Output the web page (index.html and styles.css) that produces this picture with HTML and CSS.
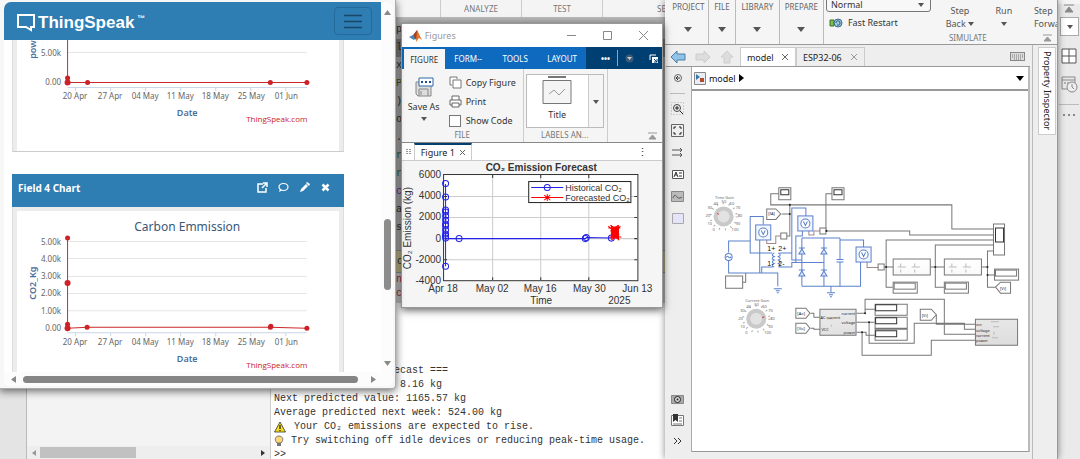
FILE: index.html
```html
<!DOCTYPE html>
<html lang="en">
<head>
<meta charset="utf-8">
<title>Energy monitoring desktop</title>
<link rel="stylesheet" href="styles.css">
</head>
<body>
<main class="desktop">
  <section class="ide">
    <header class="ide-strip"><span>ANALYZE</span><span>TEST</span><span class="cut">SE</span></header>
    <div class="ide-body">
      <div class="rail"></div>
      <div class="files">
        <div class="hbar"><svg width="6" height="6"><path d="M5 0v6L1 3z" fill="#999"/></svg><i class="hthumb"></i><svg width="6" height="6"><path d="M1 0v6l4-3z" fill="#333"/></svg></div>
      </div>
      <div class="work">
        <div class="editor">
          <p>p</p><p class="dim">l</p><p>x</p><p class="green">P</p><p>)</p><p>o</p><p>.</p><p class="green">r</p><p class="green">r</p><p class="violet">c</p><p>a</p><p>s</p>
        </div>
        <div class="warn">c</div>
        <div class="errors"><p>n</p><p>c</p></div>
        <pre class="console">=== CO₂ Emission Forecast ===
Last recorded value: 8.16 kg
Next predicted value: 1165.57 kg
Average predicted next week: 524.00 kg
<svg class="emoji" viewBox="0 0 12 12"><path d="M6 1L11.500 11H.5z" fill="#f6dc1c" stroke="#333" stroke-width=".8"/><path d="M6 4v4M6 9v1" stroke="#222" stroke-width="1.300"/></svg> Your CO₂ emissions are expected to rise.
<svg class="emoji bulb" viewBox="0 0 10 12"><path d="M3 8C0 5 1 1 5 1s5 4 2 7z" fill="#fbd77c" stroke="#555" stroke-width=".8"/><path d="M3 8h4v3H3z" fill="#777"/></svg>Try switching off idle devices or reducing peak-time usage.
&gt;&gt;</pre>
      </div>
      <aside class="ide-right">
        <svg width="10" height="9"><path d="M0 1h10M5 3l4 5H1z" stroke="#888" fill="#888"/></svg>
        <button class="combo" aria-label="Options"><svg width="6" height="4"><path d="M0 0h6L3 4z" fill="#555"/></svg></button>
        <svg width="16" height="16"><path d="M1 1h14v14H1zM8 1v14M1 8h14" fill="#fff" stroke="#555"/></svg>
        <svg width="17" height="17"><path d="M1 1h13v12H1zM1 4h13" fill="none" stroke="#888"/><path d="M3 7h2M6 7h2" stroke="#777"/><circle cx="11" cy="11" r="5" fill="#eee" stroke="#888"/><path d="M11 8v3l2 2" fill="none" stroke="#888"/></svg>
        <hr>
        <svg width="14" height="4"><path d="M1 2h2M6 2h2M11 2h2" stroke="#888" stroke-width="2"/></svg>
      </aside>
    </div>
  </section>

  <section class="sim">
    <header class="sim-tools">
      <div class="group first"><span>PROJECT</span><b class="down"></b></div>
      <div class="group file"><span>FILE</span><b class="down"></b></div>
      <div class="group"><span>LIBRARY</span><b class="down"></b></div>
      <div class="group"><span>PREPARE</span><b class="down"></b></div>
      <div class="simulate">
        <div class="sim-mode">
          <div class="mode"><select aria-label="Simulation mode"><option>Normal</option></select><b class="down small"></b></div>
          <button><svg width="14" height="12"><path d="M1 3h4v6H1z" fill="#7ac143" stroke="#3c6e2c"/><path d="M5 6h3" stroke="#333"/><ellipse cx="9" cy="6" rx="4" ry="4" fill="#9ec5dc" stroke="#3a6d8c"/><path d="M7 6c0-3 4-3 4 0s-3 2-3 2" fill="none" stroke="#245a7c"/></svg>Fast Restart</button>
        </div>
        <button class="step">Step<br>Back <b class="down small"></b></button>
        <button class="step">Run<br><b class="down small"></b></button>
        <button class="step last">Step<br>Forwa</button>
        <span class="sim-label">SIMULATE</span>
        <svg class="collapse" width="9" height="8"><path d="M0 1h9M4.500 3L8 7H1z" stroke="#999" fill="#999"/></svg>
      </div>
    </header>
    <div class="sim-body">
      <div class="sim-main">
        <nav class="tabs">
          <svg width="16" height="14"><path d="M1 7l6-6v3h8v6H7v3z" fill="#8fc3ea" stroke="#4d7da3"/></svg>
          <svg width="16" height="14"><path d="M15 7L9 1v3H1v6h8v3z" fill="#ddd" stroke="#ccc"/></svg>
          <svg width="14" height="14"><path d="M7 1L1 7h3v6h6V7h3z" fill="#ddd" stroke="#ccc"/></svg>
          <button class="tab on">model <svg width="8" height="8"><path d="M1 1l6 6M7 1L1 7" stroke="#666"/></svg></button>
          <button class="tab">ESP32-06 <svg width="8" height="8"><path d="M1 1l6 6M7 1L1 7" stroke="#999"/></svg></button>
          <svg class="keys" width="15" height="9"><rect x=".5" y=".5" width="14" height="8" fill="#ddd" stroke="#888"/><path d="M2 3h11M2 5h11M4 7h7" stroke="#777" stroke-dasharray="1 1"/></svg>
        </nav>
        <div class="sim-area">
          <div class="palette">
            <svg width="12" height="12"><circle cx="6" cy="6" r="3.500" fill="none" stroke="#666"/><path d="M8 6H4M6 4L4 6l2 2" fill="none" stroke="#333"/></svg>
            <hr>
            <svg width="13" height="13"><path d="M.5.5h12v12H.5z" fill="none" stroke="#aaa" stroke-dasharray="1 2"/><circle cx="6" cy="6" r="3.500" fill="#eee" stroke="#444"/><path d="M4 6h4M6 4v4M9 9l3 3" stroke="#222"/></svg>
            <svg width="13" height="13"><path d="M.5.5h12v12H.5z" fill="#eee" stroke="#666"/><path d="M3 5V3h2M8 3h2v2M10 8v2H8M5 10H3V8" fill="none" stroke="#222"/></svg>
            <svg width="13" height="13"><path d="M1 4h10M9 2l2 2-2 2M1 9h10M9 7l2 2-2 2" fill="none" stroke="#555"/></svg>
            <svg width="12" height="13"><path d="M.5 2.500h11v8H.5z" fill="#fff" stroke="#555"/><path d="M2 9l2-5 2 5M3 7h2M7 5h3M7 8h3" fill="none" stroke="#333"/></svg>
            <svg width="13" height="13"><path d="M.5 1.500h12v10H.5z" fill="#bbb" stroke="#888"/><path d="M2 8c2-5 3-2 4-1s2 2 5 0" fill="none" stroke="#555"/></svg>
            <svg width="12" height="13"><path d="M.5 1.500h11v10H.5z" fill="#e4e5fa" stroke="#aaa"/></svg>
            <span class="spring"></span>
            <svg width="13" height="12"><path d="M.5 2.500h12v8H.5z" fill="#aaa" stroke="#888"/><circle cx="6.500" cy="6.500" r="3" fill="#ddd" stroke="#222"/><circle cx="6.500" cy="6.500" r="1" fill="#222"/></svg>
            <svg width="13" height="13"><path d="M.5 1.500h12v10H.5z" fill="#fff" stroke="#777"/><path d="M2 0h5v8L4.500 6 2 8z" fill="#333"/><path d="M8 4h3M8 7h3M2 10h9" stroke="#777"/></svg>
            <svg width="10" height="10"><path d="M1 2l3 3-3 3M5 2l3 3-3 3" fill="none" stroke="#333"/></svg>
          </div>
          <div class="model">
            <div class="crumb"><svg width="12" height="13"><path d="M.5.5h11v12H.5z" fill="#e8eef4" stroke="#888"/><path d="M2 2l4 3-4 3z" fill="#3578ab"/><path d="M6 6h4v4H6z" fill="#b5492d"/></svg>model<svg width="5" height="8"><path d="M0 0l5 4-5 4z"/></svg><svg class="menu" width="8" height="5"><path d="M0 0h8L4 5z"/></svg></div>
            <div class="canvas">
            <svg class="diagram" viewBox="693 91 335 360" role="img" aria-label="Power supply model">
              <defs>
                <linearGradient id="g" x1="0" y1="0" x2="0" y2="1"><stop offset="0" stop-color="#fff"/><stop offset="1" stop-color="#ddd"/></linearGradient>
                <g id="knob"><circle r="13" fill="none" stroke="#aaa" stroke-width="2" stroke-dasharray="1 5"/><circle r="10" fill="#c9c9c9"/><circle r="6" fill="#e2e2e2"/>
                  <g class="tiny"><text x="-11" y="15">0</text><text x="-16" y="9">10</text><text x="-18" y="1">20</text><text x="-16" y="-7">30</text><text x="-10" y="-11">40</text><text x="-2" y="-13">50</text><text x="6" y="-11">60</text><text x="12" y="-7">70</text><text x="14" y="1">80</text><text x="12" y="9">90</text><text x="8" y="15">100</text></g></g>
                <g id="volt"><rect x="-7.500" y="-7.500" width="15" height="15" fill="#f2f6fe"/><circle r="4.500" fill="#fff"/><path d="M-2-2L0 2l2-4"/></g>
                <path id="diode" d="M-3 3h6L0-2zM-3-3h6" fill="#dde7fa"/>
                <path id="earth" d="M-4 0h8M-2 2h4M-1 4h2"/>
                <g id="show"><rect width="24" height="11" fill="#fff"/><rect class="dark" x="1" y="1" width="21" height="6"/></g>
              </defs>
              <g class="wire">
                <path d="M780 193.500h-8.500v11h180.500v24h42M790.500 204.500v31h-3M782.500 213.500h8M833 193.500h-6.500v37M826 230.500h84v4h84M884 266.500h103.500M893 286.500h-6.500v-47h107.500M944 286.500h-8.500v-42h58.500M994 250.500h-6.500v36h8M987.500 274.500h8"/>
                <path d="M857 312.500h8.500v-14h79v35h31M865.500 308.500h10M857 321.500h18M869.500 321.500v21h45v-20h50v6h11M857 331.500h9.500v3h9M862.500 331.500v23h69v-15h44M936.500 314v9.500h39M811 312.500h3.500v4h6M811 327.500h3.500v1h6M743.500 281.500h3v-9"/>
                <path class="brown" d="M767.500 239v4h9v-7.500h5M809.500 230.500v4h5v-4h6M867.500 261.500v5.500h11.500"/>
                <path d="M779.500 187.500h12v12h-12zM832.500 187.500h12v12h-12zM781.500 232.500h6v6h-6zM820.500 227.500h6v6h-6zM878.500 263.500h6v6h-6zM726.500 275.500h17v12h-17zM993.500 223.500h11v31h-11z" fill="#fff"/>
                <path class="dark" d="M781.500 189.500h8v5h-8zM834.500 189.500h8v5h-8zM995.500 227.500h8v14h-8z"/>
                <path fill="#fff" d="M767.500 208.500h9l5 5-5 5.500h-9zM796.500 307.500h10l4 5-4 5h-10zM796.500 322.500h10l4 5-4 5h-10zM920.500 308.500h11l5 5.500-5 5.500h-11zM995.500 286.500l5-5h10v11h-10z"/>
                <g fill="url(#g)"><path d="M893.500 258.500h37v16h-37zM944.500 258.500h37v16h-37zM820.500 308.500h36v26h-36zM975.500 318.500h42v26h-42z"/></g>
                <path class="faint" d="M901 263v3M901 269v3M915 263v3M915 269v3M898 266.500h8M912 266.500h8M952 263v3M952 269v3M966 263v3M966 269v3M949 266.500h8M963 266.500h8M828 318h6M832 324v2M991 321h8M993 326h6M992 337h6M994 331v3"/>
                <use href="#show" x="893.500" y="281.500"/><use href="#show" x="944.500" y="281.500"/><use href="#show" x="994.500" y="268.500"/>
                <path fill="#fff" d="M875.500 303.500h32v11h-32zM875.500 316.500h32v11h-32zM875.500 328.500h32v11h-32z"/>
                <path class="dark" d="M876 304h21v6h-21zM876 317h21v6h-21zM876 330h21v6h-21z"/>
              </g>
              <g class="blue">
                <circle cx="729.500" cy="256.500" r="3.500"/><path d="M727 257c2-4 3 3 5-1M729.500 252v-11.500h21.500M764 224v-8h-13v36.500h22M729.500 260v12.500h49v13M760.500 239v33.500M762.500 272.500v-6h11M780 252.500h12.500v-45h14v8M792.500 252.500v7h10M780 266.500h12.500v-4.500h32M796.500 262v-26.500h6.500v-5"/>
                <path d="M802.500 237.500V285M824.500 237.500V285M802.500 237.500h38M802.500 285.500h58.500v-24M840.500 237.500v21M837 259h7M837 261.500h7M840.500 262v23.500M840.500 239.500h23.500v7M831.500 285.500v6"/>
                <path d="M775 252.500q-4 2 0 3.500q-4 2 0 3.500q-4 2 0 3.500q-4 2 0 3.500M779 252.500q4 2 0 3.500q4 2 0 3.500q4 2 0 3.500q4 2 0 3.500"/>
                <use href="#volt" x="764" y="232"/><use href="#volt" x="806" y="223"/><use href="#volt" x="864" y="254"/>
                <use href="#diode" x="802.500" y="250.500"/><use href="#diode" x="824.500" y="250.500"/><use href="#diode" x="802.500" y="272.500"/><use href="#diode" x="824.500" y="272.500"/>
                <use href="#earth" x="778.500" y="288"/><use href="#earth" x="831.500" y="292"/>
              </g>
              <g fill="#222"><circle cx="790.500" cy="204.500" r="1"/><circle cx="790.500" cy="213.500" r="1"/><circle cx="827" cy="230.500" r="1"/><circle cx="886.500" cy="266.500" r="1"/><circle cx="935.500" cy="266.500" r="1"/><circle cx="987.500" cy="266.500" r="1"/><circle cx="987.500" cy="274.500" r="1"/><circle cx="865.500" cy="312.500" r="1"/><circle cx="869.500" cy="321.500" r="1"/><circle cx="862.500" cy="331.500" r="1"/></g>
              <use href="#knob" x="724.500" y="216"/><use href="#knob" x="757" y="318"/>
              <path d="M718 213l2 1M765 316l-2 1" stroke="#d33"/>
              <g class="tiny"><text x="716" y="199">Time Gain</text><text x="746" y="301">Current Gain</text></g>
              <g class="tag"><text x="769" y="215">[IA]</text><text x="798" y="314">[Ao]</text><text x="798" y="329">[Vo]</text><text x="922" y="316">[Vi]</text><text x="1000" y="289">[Vi]</text><text x="821" y="318">AC current</text><text x="822" y="330">VCC</text><text x="842" y="314">current</text><text x="842" y="323">voltage</text><text x="844" y="333">power</text><text x="976" y="325">vcc</text><text x="976" y="331">voltage</text><text x="976" y="336">current</text><text x="976" y="341">power</text></g>
              <g class="coil"><text x="768" y="250">1+</text><text x="779" y="250">2+</text><text x="768" y="265">1-</text><text x="779" y="265">2-</text></g>
            </svg>
            </div>
          </div>
        </div>
      </div>
      <aside class="inspector"><button>Property Inspector</button></aside>
    </div>
  </section>

  <section class="figure">
    <header class="fig-title">
      <svg width="13" height="12"><path d="M0 7l4-2 3 3-2 2z" fill="#4a86b5"/><path d="M4 5l4-5 2 5-3 5z" fill="#a33f24"/><path d="M8 0l5 10-3-2-3 4z" fill="#e6762b"/></svg>
      <span>Figures</span>
      <button aria-label="Minimize"><svg width="9" height="9"><path d="M0 4.500h9" stroke="#888"/></svg></button>
      <button aria-label="Maximize"><svg width="9" height="9"><path d="M.5.5h8v8h-8z" fill="none" stroke="#888"/></svg></button>
      <button aria-label="Close"><svg width="9" height="9"><path d="M0 0l9 9M9 0L0 9" stroke="#888"/></svg></button>
    </header>
    <nav class="fig-tabs">
      <button class="on">FIGURE</button><button>FORM--</button><button>TOOLS</button><button>LAYOUT</button>
      <div class="quick"><b>•••</b><i></i><svg width="9" height="9"><circle cx="4.500" cy="4.500" r="4" fill="#3a5a78"/><path d="M2 3h5L4.500 6z" fill="#ccc"/></svg><svg width="9" height="9"><path d="M1 6V1h6" fill="none" stroke="#fff"/><path d="M3 3h6v6H3z" fill="#fff"/><path d="M5 5l3 3M8 5v3H5" fill="none" stroke="#003f72"/></svg></div>
    </nav>
    <div class="ribbon">
      <div class="rib-file">
        <button class="save"><svg width="20" height="20"><path d="M2 5h15v14H4l-2-2z" fill="#ddd" stroke="#888"/><path d="M5 19v-7h9v7M7 14v4" fill="none" stroke="#888"/><path d="M5 1h14v8H5z" fill="#fff" stroke="#2c6aa8"/><path d="M7 5h2M11 5h2M15 5h2" stroke="#1d4f8c" stroke-width="2"/></svg><span>Save As</span><b class="down small"></b></button>
        <div class="actions">
          <button><svg width="13" height="13"><path d="M3 9H1V1h7v2M4 4h8v8H4z" fill="#fff" stroke="#777"/></svg>Copy Figure</button>
          <button><svg width="13" height="13"><path d="M3 5V1h7v4M3 10H1V5h11v5h-2M3 8h7v4H3z" fill="#fff" stroke="#666"/></svg>Print</button>
          <label><input type="checkbox">Show Code</label>
        </div>
        <span class="cap">FILE</span>
      </div>
      <div class="rib-labels">
        <div class="gallery"><button class="pick"><svg width="30" height="30"><path d="M6 2h18" stroke="#777" stroke-width="2"/><path d="M1 5.500h28v23H1z" fill="#f5f5f5" stroke="#777"/><path d="M7 19l5-4 5 5 6-6" fill="none" stroke="#999"/></svg>Title</button><button class="more" aria-label="More"><b class="down small"></b></button></div>
        <span class="cap">LABELS AN...</span>
      </div>
      <svg class="fold" width="9" height="8"><path d="M0 1h9M4.500 3L8 7H1z" stroke="#999" fill="#999"/></svg>
    </div>
    <div class="doc-tabs"><svg class="grip" width="5" height="7"><path d="M0 1.500h5M0 3.500h5M0 5.500h5" stroke="#999" stroke-dasharray="2 1"/></svg><button>Figure 1 <svg width="7" height="7"><path d="M1 1l5 5M6 1L1 6" stroke="#666"/></svg></button><span class="kebab">⋮</span></div>
    <svg class="plot" viewBox="402 161 260 146" role="img" aria-label="CO₂ Emission Forecast">
      <rect x="443.500" y="174.500" width="194" height="106" fill="#fff" stroke="#333" stroke-width="1"/>
      <path d="M492.500 175v105M540.500 175v105M588.500 175v105M444 196.500h193M444 217.500h193M444 238.500h193M444 259.500h193" stroke="#ccc" fill="none"/>
      <path d="M444 196.500h3M444 217.500h3M444 259.500h3M637 196.500h-3M637 217.500h-3M637 238.500h-3M637 259.500h-3M492.500 175v3M540.500 175v3M588.500 175v3M492.500 280v-3M540.500 280v-3M588.500 280v-3" stroke="#333"/>
      <g class="hist"><path d="M445.500 184v82M445.500 238.500H585l1-1 25 .5"/>
        <circle cx="445.500" cy="183.500" r="3"/><circle cx="445.500" cy="197" r="3"/><circle cx="445.500" cy="210" r="3"/><circle cx="445.500" cy="212" r="3"/><circle cx="445.500" cy="216" r="3"/><circle cx="445.500" cy="220" r="3"/><circle cx="445.500" cy="224" r="3"/><circle cx="445.500" cy="226" r="3"/><circle cx="445.500" cy="230" r="3"/><circle cx="445.500" cy="234" r="3"/><circle cx="445.500" cy="236" r="3"/><circle cx="445.500" cy="238" r="3"/><circle cx="445.500" cy="266" r="3"/><circle cx="459" cy="238.500" r="3"/><circle cx="585" cy="238.500" r="3"/><circle cx="586" cy="237.500" r="3"/><circle cx="611" cy="238" r="3"/></g>
      <g class="cast"><path d="M611 227h7v11h-6z" fill="#f00"/><path d="M608 228h12M610 225l8 6M618 225l-8 6M609 237h12M611 234l8 6M619 234l-8 6M611 225v14M618 225v15M608 226l4 4M620 226l-4 4"/></g>
      <rect x="528.500" y="181.500" width="102" height="21" fill="#fff" stroke="#222"/>
      <g class="hist"><path d="M531 187.500h32"/><circle cx="547" cy="187.500" r="3"/></g>
      <g class="cast"><path d="M531 197.500h32M547 194v7M544 195l6 5M550 195l-6 5"/></g>
      <g class="key"><text x="565" y="191">Historical CO₂</text><text x="565" y="201">Forecasted CO₂</text></g>
      <text class="head" x="541" y="171">CO₂ Emission Forecast</text>
      <g class="yt"><text x="441" y="178">6000</text><text x="441" y="199">4000</text><text x="441" y="220">2000</text><text x="441" y="242">0</text><text x="441" y="263">-2000</text><text x="441" y="284">-4000</text></g>
      <g class="xt"><text x="443" y="292">Apr 18</text><text x="492" y="292">May 02</text><text x="540" y="292">May 16</text><text x="589" y="292">May 30</text><text x="637" y="292">Jun 13</text><text x="541" y="304">Time</text><text x="619" y="304">2025</text><text transform="translate(411 228) rotate(-90)">CO₂ Emission (kg)</text></g>
    </svg>
  </section>

  <section class="web">
    <div class="web-row">
      <div class="page">
        <header class="brand">
          <a href="#"><svg width="19" height="18"><path d="M1 1h16v12h-3v3l-5-3H1z" fill="none" stroke="#fff" stroke-width="2"/></svg>ThingSpeak<sup>™</sup></a>
          <button aria-label="Menu"><svg width="18" height="15"><path d="M0 1.500h18M0 7.500h18M0 13.500h18" stroke="#18486a" stroke-width="1.500"/></svg></button>
        </header>
        <article class="panel first">
          <svg class="chart" viewBox="17 40 322 111" role="img" aria-label="Power chart">
            <path d="M67.500 52.500h239" stroke="#e6e6e6"/><path class="axis" d="M67.500 87.500h239M75.500 88v3M110.500 88v3M145.500 88v3M180.500 88v3M215.500 88v3M250.500 88v3M285.500 88v3"/>
            <g class="line"><path d="M67.500 40v42.500h239"/><circle cx="67.500" cy="78" r="2.500"/><circle cx="67.500" cy="82.500" r="3"/><circle cx="87.500" cy="82.500" r="2.500"/><circle cx="270" cy="82.500" r="2.500"/><circle cx="306.500" cy="82.500" r="2.500"/></g>
            <g class="ylab"><text x="61" y="56">5.00k</text><text x="61" y="85">0.00</text></g>
            <g class="xlab"><text x="75" y="99">20 Apr</text><text x="110" y="99">27 Apr</text><text x="145" y="99">04 May</text><text x="180" y="99">11 May</text><text x="215" y="99">18 May</text><text x="251" y="99">25 May</text><text x="286" y="99">01 Jun</text></g>
            <text class="name" x="187" y="116">Date</text><text class="credit" x="307" y="122">ThingSpeak.com</text>
            <text class="name" transform="translate(36 45) rotate(-90)">power</text>
          </svg>
        </article>
        <article class="panel">
          <header class="panel-head"><h2>Field 4 Chart</h2>
            <button aria-label="Open"><svg width="11" height="11"><path d="M6 2H1v8h8V6M6 1h4v4M10 1L5 6" fill="none" stroke="#fff" stroke-width="1.500"/></svg></button>
            <button aria-label="Comment"><svg width="11" height="11"><ellipse cx="5.500" cy="5" rx="4.500" ry="3.500" fill="none" stroke="#fff" stroke-width="1.200"/><path d="M2 7l-1 3 3-1.500z" fill="#fff"/></svg></button>
            <button aria-label="Edit"><svg width="11" height="11"><path d="M1 10l1-3 5-5 2 2-5 5zM7 1l1-1 3 2-1 2z" fill="#fff"/></svg></button>
            <button aria-label="Remove"><svg width="11" height="11"><path d="M2.500 2.500l6 6M8.500 2.500l-6 6" stroke="#fff" stroke-width="2.500"/></svg></button>
          </header>
          <svg class="chart" viewBox="17 211 322 161" role="img" aria-label="Carbon Emmission chart">
            <text class="title" x="187" y="231">Carbon Emmission</text>
            <path d="M67.500 241.500h239M67.500 258.500h239M67.500 276.500h239M67.500 293.500h239M67.500 310.500h239" stroke="#e6e6e6"/>
            <path class="axis" d="M67.500 332.500h239M75.500 333v3M110.500 333v3M145.500 333v3M180.500 333v3M215.500 333v3M250.500 333v3M285.500 333v3"/>
            <g class="line"><path d="M67.500 238v90l20-1h182l37 1"/><circle cx="67.500" cy="238" r="2.500"/><circle cx="67.500" cy="283" r="3"/><circle cx="67.500" cy="324" r="2.500"/><circle cx="67.500" cy="328" r="3"/><circle cx="87" cy="327" r="2.500"/><circle cx="270" cy="327" r="2.500"/><circle cx="270.500" cy="326" r="2.500"/><circle cx="306.500" cy="328" r="2.500"/></g>
            <g class="ylab"><text x="61" y="245">5.00k</text><text x="61" y="262">4.00k</text><text x="61" y="279">3.00k</text><text x="61" y="296">2.00k</text><text x="61" y="314">1.00k</text><text x="61" y="331">0.00</text></g>
            <g class="xlab"><text x="75" y="345">20 Apr</text><text x="110" y="345">27 Apr</text><text x="145" y="345">04 May</text><text x="180" y="345">11 May</text><text x="215" y="345">18 May</text><text x="251" y="345">25 May</text><text x="286" y="345">01 Jun</text></g>
            <text class="name" x="187" y="362">Date</text><text class="credit" x="307" y="368">ThingSpeak.com</text>
            <text class="name" transform="translate(36 283) rotate(-90)">CO2_Kg</text>
          </svg>
        </article>
      </div>
      <div class="vbar"><svg width="7" height="5"><path d="M0 5h7L3.500 0z" fill="#888"/></svg><i></i><svg width="7" height="5"><path d="M0 0h7L3.500 5z" fill="#888"/></svg></div>
    </div>
    <div class="wbar"><svg width="5" height="7"><path d="M5 0v7L0 3.500z" fill="#888"/></svg><i></i><svg width="5" height="7"><path d="M0 0v7l5-3.500z" fill="#888"/></svg></div>
  </section>
</main>
</body>
</html>
```
FILE: styles.css
```css
* { box-sizing: border-box; }
body { margin: 0; font-family: "Noto Sans", "Open Sans", sans-serif; font-size: 9px; color: #333; }
button, select, input { font: inherit; color: inherit; margin: 0; }
button { border: 0; background: none; padding: 0; }
svg { display: block; flex: none; }
p, h2 { margin: 0; }
.desktop { position: relative; height: 100vh; overflow: hidden; background: #e4e4e4; }
.down { display: inline-block; border: 4px solid transparent; border-top: 5px solid #555; border-bottom: 0; }
.down.small { border-width: 3px; border-top-width: 4px; border-bottom-width: 0; vertical-align: 1px; }

/* Background IDE */
.ide { height: 100%; display: flex; flex-direction: column; }
.ide-strip { display: flex; height: 18px; padding-left: 440px; background: #f4f4f4; border-bottom: 1px solid #bbb; color: #777; font-size: 8px; line-height: 18px; }
.ide-strip span { width: 81px; border-left: 1px solid #ccc; text-align: center; }
.ide-strip .cut { text-align: left; padding-left: 54px; overflow: hidden; }
.ide-body { flex: 1; display: flex; min-height: 0; }
.rail { width: 27px; background: #e4e4e4; border-right: 1px solid #bbb; }
.files { width: 244px; background: #f3f3f3; border-right: 1px solid #ccc; display: flex; flex-direction: column; justify-content: flex-end; }
.hbar { height: 13px; display: flex; align-items: center; padding: 0 4px; gap: 3px; background: #eee; }
.hthumb { width: 96px; height: 11px; background: #c1c1c1; margin-right: auto; }
.work { flex: 1; display: flex; flex-direction: column; background: #fff; color: #333; font: 10px/14px "Liberation Mono", "DejaVu Sans Mono", monospace; min-width: 0; }
.editor { padding: 3px 0 0 125px; height: 232px; background: #b7b7b7; line-height: 18px; }
.green { color: #276b30; }
.violet { color: #7a28b8; }
.dim { background: #888; }
.warn { height: 23px; padding: 4px 0 0 125px; background: #cbc696; border: 1px solid #999; }
.errors { height: 30px; padding-left: 125px; background: #d5d5d5; color: #b82c35; }
.console { margin: auto 0 -3px; padding: 0 0 0 3px; font: inherit; color: #333; }
.emoji { display: inline-block; width: 12px; height: 12px; vertical-align: -2px; margin: -2px 2px -2px 0; }
.bulb { width: 10px; margin-right: 7px; }
.ide-right { width: 22px; display: flex; flex-direction: column; align-items: center; gap: 12px; background: #eaeaea; margin-top: -14px; }
.ide-right .combo { width: 19px; height: 19px; background: #fff; border: 1px solid #aaa; padding: 6px; margin-top: -8px; }
.ide-right hr { width: 20px; border: 0; border-top: 1px solid #bbb; margin: -1px 0 -4px; }

/* Simulink window */
.sim { position: absolute; top: 0; bottom: 0; right: 22px; width: 36.4%; display: flex; flex-direction: column; background: #eee; border-right: 1px solid #999; box-shadow: 0 0 7px #0007; overflow: hidden; }
.sim-tools { display: flex; height: 45px; background: #f5f5f5; border-bottom: 1px solid #999; white-space: nowrap; }
.group { width: 44px; display: flex; flex-direction: column; align-items: center; gap: 13px; border-right: 1px solid #bbb; font-size: 8px; line-height: 14px; color: #666; }
.group.first { padding-left: 4px; }
.group.file { width: 27px; }
.simulate { position: relative; flex: 1; display: flex; min-width: 0; padding-left: 2px; }
.sim-mode { display: flex; flex-direction: column; gap: 4px; width: 112px; flex: none; }
.mode { display: flex; align-items: center; width: 105px; height: 15px; margin-top: -3px; border: 1px solid #777; border-radius: 3px; background: #f8f8f8; }
.mode select { flex: 1; appearance: none; height: 13px; padding: 0 4px; border: 0; background: none; line-height: 13px; }
.mode .down { margin-right: 6px; }
.sim-mode button { display: flex; align-items: center; gap: 5px; padding-left: 3px; line-height: 14px; }
.step { width: 44px; flex: none; line-height: 13px; height: 30px; margin-top: 2px; color: #555; }
.step.last { width: 32px; margin-left: 6px; text-align: left; padding-left: 2px; }
.sim-label { position: absolute; left: 125px; bottom: 0; font-size: 8px; color: #777; line-height: 12px; }
.collapse { position: absolute; right: 5px; bottom: 2px; }
.sim-body { flex: 1; display: flex; min-height: 0; }
.sim-main { flex: 1; display: flex; flex-direction: column; min-width: 0; padding: 2px 2px 7px 0; }
.tabs { display: flex; height: 20px; align-items: center; gap: 9px; padding-left: 4px; border-bottom: 1px solid #999; margin-left: 1px; }
.tab { display: flex; align-items: center; justify-content: space-between; height: 19px; width: 69px; padding: 0 6px; margin-left: -9px; border: 1px solid #ccc; border-bottom: 0; color: #222; }
.tabs svg + .tab { width: 56px; margin-left: -3px; }
.tab.on { background: #fff; }
.keys { margin-left: auto; margin-right: 5px; }
.sim-area { flex: 1; display: flex; min-height: 0; }
.palette { width: 27px; display: flex; flex-direction: column; align-items: center; gap: 9px; padding: 5px 0 6px; border-right: 1px solid #aaa; }
.palette hr { width: 15px; border: 0; border-top: 1px solid #bbb; margin: 0 0 -1px; }
.spring { flex: 1; }
.model { flex: 1; display: flex; flex-direction: column; min-width: 0; background: #fff; border-right: 2px solid #bbb; border-bottom: 1px solid #999; }
.crumb { display: flex; align-items: center; gap: 3px; height: 24px; padding: 0 4px 0 2px; border-bottom: 2px solid #999; color: #111; }
.crumb .menu { margin-left: auto; }
.canvas { flex: 1; min-height: 0; }
.diagram { width: 100%; height: auto; }
.wire { stroke: #777; fill: none; stroke-width: 1; }
.wire .dark { stroke: #333; }
.wire .brown { stroke: #a08888; }
.wire .faint { stroke: #bbb; }
.blue { stroke: #5b80cc; fill: none; }
.tiny { font-size: 4px; fill: #666; stroke: none; }
.tag { font-size: 4px; fill: #222; }
.coil { font-size: 7px; font-family: "Liberation Sans", sans-serif; fill: #111; }
.inspector { width: 25px; border-left: 1px solid #bbb; padding: 2px 2px 0 5px; }
.inspector button { width: 18px; height: 88px; background: #fff; border: 1px solid #ccc; writing-mode: vertical-rl; color: #222; }

/* Figures window */
.figure { position: absolute; left: 37.1%; top: 23px; width: 24.3%; background: #f5f5f5; border: 1px solid #999; box-shadow: 0 2px 8px #000a; }
.fig-title { display: flex; align-items: center; height: 23px; padding: 0 14px 0 7px; gap: 27px; background: #fff; color: #999; }
.fig-title span { margin: 0 auto 0 -24px; }
.fig-tabs { display: flex; height: 22px; background: #0d6abf; color: #fff; font-size: 8px; }
.fig-tabs button { width: 47px; }
.fig-tabs .on { width: 41px; margin: 2px 0 0 2px; background: #f5f5f5; color: #333; }
.quick { flex: 1; display: flex; align-items: center; justify-content: flex-end; gap: 7px; padding-right: 4px; background: #003f72; }
.quick i { height: 16px; border-left: 1px solid #8aa7c0; }
.quick svg:last-child { margin-left: 8px; }
.ribbon { display: flex; height: 74px; border-bottom: 1px solid #888; }
.rib-file { width: 122px; display: grid; grid-template-columns: 45px 1fr; grid-template-rows: 1fr 13px; border-right: 1px solid #ccc; }
.save { display: flex; flex-direction: column; align-items: center; gap: 3px; padding-top: 8px; white-space: nowrap; }
.save span { line-height: 14px; margin-left: -1px; }
.actions { display: flex; flex-direction: column; gap: 6px; padding-top: 7px; white-space: nowrap; }
.actions button, .actions label { display: flex; align-items: center; gap: 4px; height: 13px; line-height: 13px; padding-left: 2px; }
.actions input { appearance: none; width: 12px; height: 12px; border: 1px solid #777; background: #fff; margin-right: 1px; }
.cap { grid-column: 1 / -1; text-align: center; font-size: 8px; line-height: 12px; color: #777; }
.rib-labels { width: 84px; padding: 5px 3px 0 2px; display: flex; flex-direction: column; justify-content: space-between; border-right: 1px solid #ccc; }
.gallery { display: flex; height: 54px; border: 1px solid #bbb; }
.pick { flex: 1; display: flex; flex-direction: column; align-items: center; gap: 2px; background: #fff; line-height: 16px; }
.more { width: 15px; border-left: 1px solid #ccc; }
.rib-labels .cap { line-height: 12px; padding-bottom: 1px; }
.fold { margin: auto 5px 2px auto; }
.doc-tabs { display: flex; height: 18px; background: #fff; border-bottom: 1px solid #ccc; line-height: 17px; }
.grip { margin: 5px 3px 0 4px; }
.doc-tabs button { display: flex; align-items: center; gap: 4px; padding: 0 5px 0 6px; border: 1px solid #ccc; border-top: 2px solid #003f72; border-bottom: 0; color: #222; }
.kebab { margin: 0 14px 0 auto; font-size: 11px; }
.plot { width: 100%; height: auto; font-family: "Liberation Sans", sans-serif; font-size: 10px; fill: #333; }
.hist { stroke: #2222e8; fill: none; }
.cast { stroke: #f00; fill: none; }
.key { font-size: 9px; }
.head { font-weight: bold; font-size: 10px; text-anchor: middle; }
.yt { text-anchor: end; }
.xt { text-anchor: middle; }

/* ThingSpeak browser window */
.web { position: absolute; left: -1px; top: 0; width: 36.8%; padding: 2px 2px 2px 4px; background: #f7f7f7; border: 1px solid #aaa; border-top: 0; box-shadow: 0 2px 8px #0009; border-radius: 0 0 4px 0; }
.web-row { display: flex; background: #fcfcfc; border-radius: 7px 7px 0 0; overflow: hidden; }
.page { flex: 1; min-width: 0; background: #fff; }
.brand { display: flex; align-items: center; justify-content: space-between; height: 38px; padding: 0 9px 0 13px; background: #2e7db3; }
.brand a { display: flex; align-items: center; gap: 2px; padding-top: 4px; color: #fff; text-decoration: none; font: bold 17px/20px "Liberation Sans", sans-serif; }
.brand sup { font-size: 8px; margin: -8px 0 0 1px; }
.brand button { display: flex; justify-content: center; align-items: center; width: 38px; height: 28px; border: 1px solid #246b9c; border-radius: 4px; }
.panel { margin: 0 37px 0 8px; border: 1px solid #ddd; border-bottom: 0; background: #ececec; padding: 0 4px; }
.panel.first { border-top: 0; border-bottom: 1px solid #ccc; margin-bottom: 22px; }
.panel-head { display: flex; align-items: center; gap: 10px; height: 33px; margin: -1px -5px 4px; padding: 0 13px 6px 6px; background: #2e7db3; color: #fff; }
.panel-head h2 { margin-right: auto; font-size: 10px; line-height: 14px; }
.chart { width: 100%; height: auto; background: #fff; font-size: 8px; fill: #666; }
.axis { stroke: #c8d6e6; }
.line { stroke: #cc2a2a; fill: #cc2127; }
.line path { fill: none; }
.line circle { stroke: none; }
.ylab { text-anchor: end; }
.xlab { text-anchor: middle; }
.name { fill: #4a6f9c; font-size: 9px; font-weight: 600; text-anchor: middle; }
.credit { fill: #cc2127; text-anchor: end; font-family: "Open Sans", sans-serif; }
.title { fill: #3b5775; font-size: 12px; text-anchor: middle; }
.vbar { width: 12px; display: flex; flex-direction: column; align-items: center; padding: 8px 0 6px; }
.vbar i { width: 7px; height: 71px; margin: auto 0 71px; border-radius: 4px; background: #8c8c8c; }
.wbar { display: flex; align-items: center; height: 14px; padding: 0 17px 0 7px; gap: 7px; background: #fcfcfc; border-radius: 0 0 6px 6px; }
.wbar i { flex: 1; height: 7px; margin-right: 6px; border-radius: 4px; background: #858585; }
```
